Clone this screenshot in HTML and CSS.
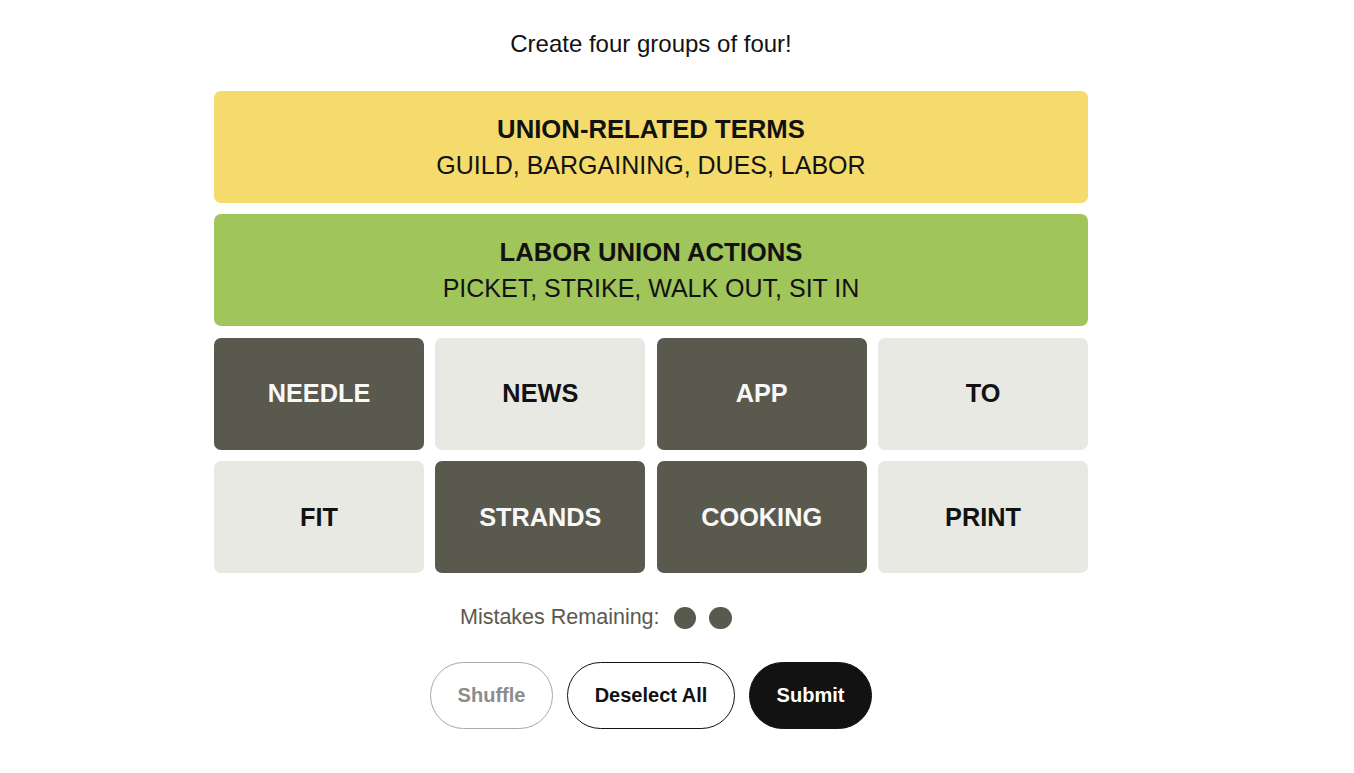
FILE: index.html
```html
<!DOCTYPE html>
<html lang="en">
<head>
<meta charset="utf-8">
<title>Connections</title>
<link rel="stylesheet" href="styles.css">
</head>
<body>
<main class="page">
  <h1 class="prompt">Create four groups of four!</h1>
  <section class="board">
    <div class="solved yellow">
      <div class="solved-title">UNION-RELATED TERMS</div>
      <div class="solved-words">GUILD, BARGAINING, DUES, LABOR</div>
    </div>
    <div class="solved green">
      <div class="solved-title">LABOR UNION ACTIONS</div>
      <div class="solved-words">PICKET, STRIKE, WALK OUT, SIT IN</div>
    </div>
    <div class="tile selected">NEEDLE</div>
    <div class="tile">NEWS</div>
    <div class="tile selected">APP</div>
    <div class="tile">TO</div>
    <div class="tile">FIT</div>
    <div class="tile selected">STRANDS</div>
    <div class="tile selected">COOKING</div>
    <div class="tile">PRINT</div>
  </section>
  <div class="mistakes">
    <span class="mistakes-label">Mistakes Remaining:</span>
    <span class="dots"><span class="dot"></span><span class="dot"></span></span>
  </div>
  <div class="actions">
    <button class="btn btn-disabled">Shuffle</button>
    <button class="btn btn-outline">Deselect All</button>
    <button class="btn btn-primary">Submit</button>
  </div>
</main>
</body>
</html>
```
FILE: styles.css
```css
* { box-sizing: border-box; }
html, body { margin: 0; padding: 0; background: #ffffff; }
body {
  font-family: "Liberation Sans", Arial, sans-serif;
  color: #121212;
}
.page {
  width: 1302px;
  display: flex;
  flex-direction: column;
  align-items: center;
  padding-top: 30px;
}
.prompt {
  margin: 0;
  font-size: 24px;
  line-height: 28px;
  font-weight: 400;
  color: #121212;
}
.board {
  margin-top: 33px;
  width: 874px;
  display: grid;
  grid-template-columns: repeat(4, 1fr);
  grid-auto-rows: 112px;
  gap: 11.4px 11.4px;
}
.solved {
  grid-column: 1 / -1;
  border-radius: 7px;
  display: flex;
  flex-direction: column;
  align-items: center;
  justify-content: center;
  line-height: 36px;
  color: #121212;
}
.solved-title { font-weight: 700; font-size: 25.7px; }
.solved-words { font-weight: 400; font-size: 25px; }
.yellow { background: #f5db6b; }
.green { background: #a0c55b; }
.tile {
  border-radius: 7px;
  background: #e9e9e3;
  display: flex;
  align-items: center;
  justify-content: center;
  font-size: 25.3px;
  font-weight: 700;
  color: #121212;
}
.tile.selected {
  background: #5a594e;
  color: #f8f8f8;
}
.mistakes {
  margin-top: 29px;
  width: 382px;
  height: 30px;
  display: flex;
  align-items: center;
  gap: 14px;
}
.mistakes-label {
  font-size: 21.5px;
  color: #5a594e;
  line-height: 30px;
}
.dots {
  display: flex;
  gap: 13px;
  align-items: center;
  padding-top: 2px;
}
.dot {
  width: 22.5px;
  height: 22.5px;
  border-radius: 50%;
  background: #5a594e;
}
.actions {
  margin-top: 30px;
  display: flex;
  gap: 14px;
}
.btn {
  height: 67px;
  border-radius: 34px;
  font-family: "Liberation Sans", Arial, sans-serif;
  font-size: 20px;
  font-weight: 700;
  padding: 0;
  background: #ffffff;
  border: 1.5px solid #121212;
  color: #121212;
}
.btn-disabled {
  width: 123px;
  border-color: #a9a9a9;
  color: #8c8c8c;
}
.btn-outline { width: 168px; }
.btn-primary {
  width: 123px;
  background: #121212;
  color: #ffffff;
}
```
